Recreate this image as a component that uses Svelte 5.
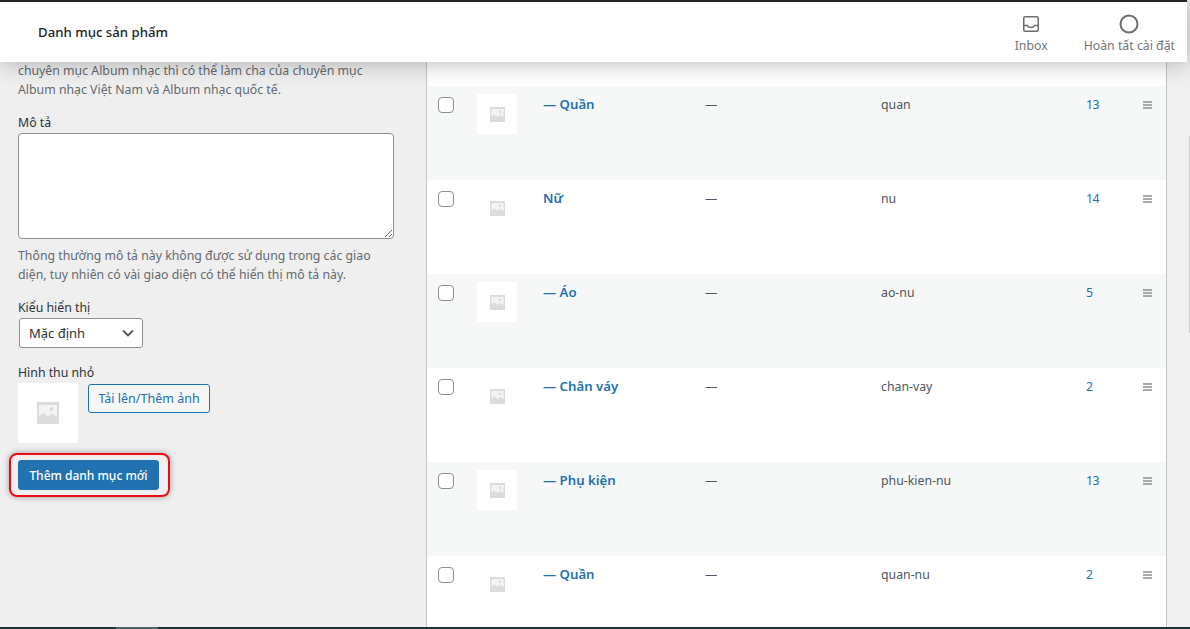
<script lang="ts">
	type Row = { name: string; slug: string; count: number };

	const rows: Row[] = [
		{ name: '— Quần', slug: 'quan', count: 13 },
		{ name: 'Nữ', slug: 'nu', count: 14 },
		{ name: '— Áo', slug: 'ao-nu', count: 5 },
		{ name: '— Chân váy', slug: 'chan-vay', count: 2 },
		{ name: '— Phụ kiện', slug: 'phu-kien-nu', count: 13 },
		{ name: '— Quần', slug: 'quan-nu', count: 2 }
	];
</script>

{#snippet placeholder(size: number)}
	<svg width={size} height={size} viewBox="0 0 22 22" aria-hidden="true">
		<path fill="#dcdcdc" d="M0 0h22v22H0z" />
		<path fill="#f3f3f3" d="M2 3h18v12l-5-3.500-4 3-4.500-4L2 14z" />
		<circle cx="14.500" cy="7" r="2" fill="#dcdcdc" />
	</svg>
{/snippet}

<div class="page">
	<header class="topbar">
		<h1>Danh mục sản phẩm</h1>
		<nav class="actions">
			<div class="action">
				<div class="icon">
					<svg width="16" height="16" viewBox="0 0 16 16" fill="none" stroke="#6e6e6e" stroke-width="1.500">
						<rect x="0.750" y="0.750" width="14.500" height="14.500" rx="1.500" />
						<path d="M0.750 9.500h3.700c.5 1.400 1.800 2 3.550 2s3.050-.6 3.550-2h3.700" />
					</svg>
				</div>
				<span>Inbox</span>
			</div>
			<div class="action">
				<div class="icon">
					<svg width="20" height="20" viewBox="0 0 20 20" fill="none" stroke="#6e6e6e" stroke-width="2">
						<circle cx="10" cy="10" r="8.500" />
					</svg>
				</div>
				<span>Hoàn tất cài đặt</span>
			</div>
		</nav>
	</header>

	<main class="content">
		<section class="form">
			<p class="help first">
				chuyên mục Album nhạc thì có thể làm cha của chuyên mục Album nhạc Việt Nam và Album nhạc quốc tế.
			</p>

			<label class="label desc-label" for="desc">Mô tả</label>
			<textarea id="desc"></textarea>
			<p class="help">
				Thông thường mô tả này không được sử dụng trong các giao diện, tuy nhiên có vài giao diện có thể hiển thị mô tả này.
			</p>

			<label class="label type-label" for="kind">Kiểu hiển thị</label>
			<div class="select" id="kind">
				<span>Mặc định</span>
				<svg width="12" height="8" viewBox="0 0 12 8" fill="none" stroke="#50575e" stroke-width="1.800">
					<path d="M1 1.500l5 5 5-5" />
				</svg>
			</div>

			<div class="label thumb-label">Hình thu nhỏ</div>
			<div class="thumb-field">
				<div class="thumb-large">{@render placeholder(22)}</div>
				<button class="upload">Tải lên/Thêm ảnh</button>
			</div>

			<div class="highlight">
				<button class="primary">Thêm danh mục mới</button>
			</div>
		</section>

		<section class="table">
			<div class="spacer"></div>
			{#each rows as row, i}
				<div class="row" class:alt={i % 2 === 0}>
					<div class="check"><span class="box"></span></div>
					<div class="thumb">{@render placeholder(15)}</div>
					<a class="name" href="#top">{row.name}</a>
					<div class="dash">—</div>
					<div class="slug">{row.slug}</div>
					<a class="count" href="#top">{row.count}</a>
					<div class="handle"><i></i><i></i><i></i></div>
				</div>
			{/each}
		</section>

		<div class="gutter"><div class="scrollbar"></div></div>
	</main>

	<footer class="bottom"><div class="bottom-thumb"></div></footer>
</div>

<style>
	:global(body) {
		margin: 0;
		background: #f0f0f1;
	}

	.page {
		display: flex;
		flex-direction: column;
		height: 629px;
		overflow: hidden;
		font-family: 'Noto Sans', 'Open Sans', sans-serif;
		font-size: 13px;
		color: #3c434a;
	}

	.topbar {
		position: relative;
		z-index: 2;
		flex: none;
		display: flex;
		justify-content: space-between;
		height: 60px;
		margin-right: 3px;
		background: #fff;
		border-top: 2px solid #1d2327;
		box-shadow: 0 0 24px rgba(0, 0, 0, 0.3);
	}

	h1 {
		margin: 0;
		padding: 21px 0 0 38px;
		font-size: 13.200px;
		line-height: 19px;
		font-weight: 500;
		color: #1e1e1e;
	}

	.actions {
		display: flex;
		gap: 36px;
		padding: 12px 12px 0 0;
	}

	.action {
		display: flex;
		flex-direction: column;
		align-items: center;
		color: #757575;
		font-size: 12.300px;
		line-height: 19px;
	}

	.icon {
		display: flex;
		align-items: center;
		height: 20px;
		margin-bottom: 2px;
	}

	.content {
		flex: 1;
		min-height: 0;
		display: flex;
	}

	.form {
		flex: none;
		box-sizing: border-box;
		width: 426px;
		padding: 0 32px 0 18px;
		background: #efefef;
	}

	.help {
		margin: 0;
		line-height: 19px;
		font-size: 12.300px;
		color: #646970;
	}

	.help.first {
		margin-top: -1px;
	}

	.label {
		display: block;
		line-height: 19px;
		font-size: 12.300px;
		color: #2c3338;
	}

	.desc-label {
		margin-top: 14px;
		margin-bottom: 1px;
	}

	textarea {
		display: block;
		box-sizing: border-box;
		width: 376px;
		height: 106px;
		margin: 0 0 7px;
		padding: 0;
		border: 1px solid #8c8f94;
		border-radius: 4px;
		background: #fff;
	}

	.type-label {
		margin-top: 14px;
		margin-bottom: 1px;
	}

	.select {
		box-sizing: border-box;
		display: flex;
		align-items: center;
		justify-content: space-between;
		width: 124px;
		height: 30px;
		margin-left: 1px;
		padding: 0 8px 0 9px;
		border: 1px solid #8c8f94;
		border-radius: 3px;
		background: #fff;
		font-size: 13px;
		color: #2c3338;
	}

	.thumb-label {
		margin-top: 15px;
		margin-bottom: 1px;
	}

	.thumb-field {
		display: flex;
		align-items: flex-start;
		gap: 10px;
	}

	.thumb-large {
		display: flex;
		align-items: center;
		justify-content: center;
		width: 60px;
		height: 60px;
		background: #fff;
	}

	.upload {
		box-sizing: border-box;
		height: 29px;
		width: 122px;
		margin-top: 1px;
		padding: 0;
		border: 1px solid #2271b1;
		border-radius: 3px;
		background: #f6f7f7;
		color: #2271b1;
		font: inherit;
		font-size: 12.500px;
	}

	.highlight {
		width: max-content;
		margin: 10px 0 0 -9px;
		padding: 5px 9px 5px 7px;
		border: 2px solid #ee0a14;
		border-radius: 8px;
		box-shadow: 0 0 6px rgba(0, 0, 0, 0.35);
		line-height: 0;
	}

	.primary {
		box-sizing: border-box;
		width: 141px;
		height: 30px;
		padding: 1px 0 0;
		border: 1px solid #2271b1;
		border-radius: 3px;
		background: #2271b1;
		color: #fff;
		font: inherit;
		font-size: 12px;
		font-weight: 500;
		line-height: 1;
	}

	.table {
		flex: none;
		width: 739px;
		background: #fff;
		border-left: 1px solid #c3c4c7;
		border-right: 1px solid #c3c4c7;
	}

	.spacer {
		height: 24px;
	}

	.row {
		display: grid;
		grid-template-columns: 50px 66px 162px 176px 205px 56px 24px;
		height: 94px;
		align-items: start;
		line-height: 19px;
		color: #50575e;
		font-size: 12.300px;
	}

	.row.alt {
		background: #f6f7f7;
	}

	.check {
		padding: 11px 0 0 11px;
	}

	.box {
		display: block;
		box-sizing: border-box;
		width: 16px;
		height: 16px;
		border: 1px solid #8c8f94;
		border-radius: 4px;
		background: #fff;
	}

	.thumb {
		display: flex;
		align-items: center;
		justify-content: center;
		width: 40px;
		height: 40px;
		margin-top: 8px;
		background: #fff;
	}

	.name {
		margin-top: 9px;
		color: #2271b1;
		font-weight: 600;
		text-decoration: none;
		font-size: 13.200px;
	}

	.dash,
	.slug,
	.count {
		margin-top: 9px;
	}

	.count {
		color: #2271b1;
		font-size: 12.300px;
		letter-spacing: -0.600px;
		text-decoration: none;
	}

	.handle {
		display: flex;
		flex-direction: column;
		gap: 1px;
		width: 9px;
		margin: 15px 0 0 1px;
	}

	.handle i {
		display: block;
		height: 2px;
		background: #a7aaad;
	}

	.gutter {
		flex: 1;
		display: flex;
		justify-content: flex-end;
		align-items: flex-start;
		background: #f0f0f1;
	}

	.scrollbar {
		width: 1px;
		height: 197px;
		margin-top: 74px;
		background: #c8c8c8;
	}

	.bottom {
		flex: none;
		height: 2px;
		padding-left: 116px;
		background: #1d2f38;
	}

	.bottom-thumb {
		width: 42px;
		height: 2px;
		background: #50606a;
	}
</style>
